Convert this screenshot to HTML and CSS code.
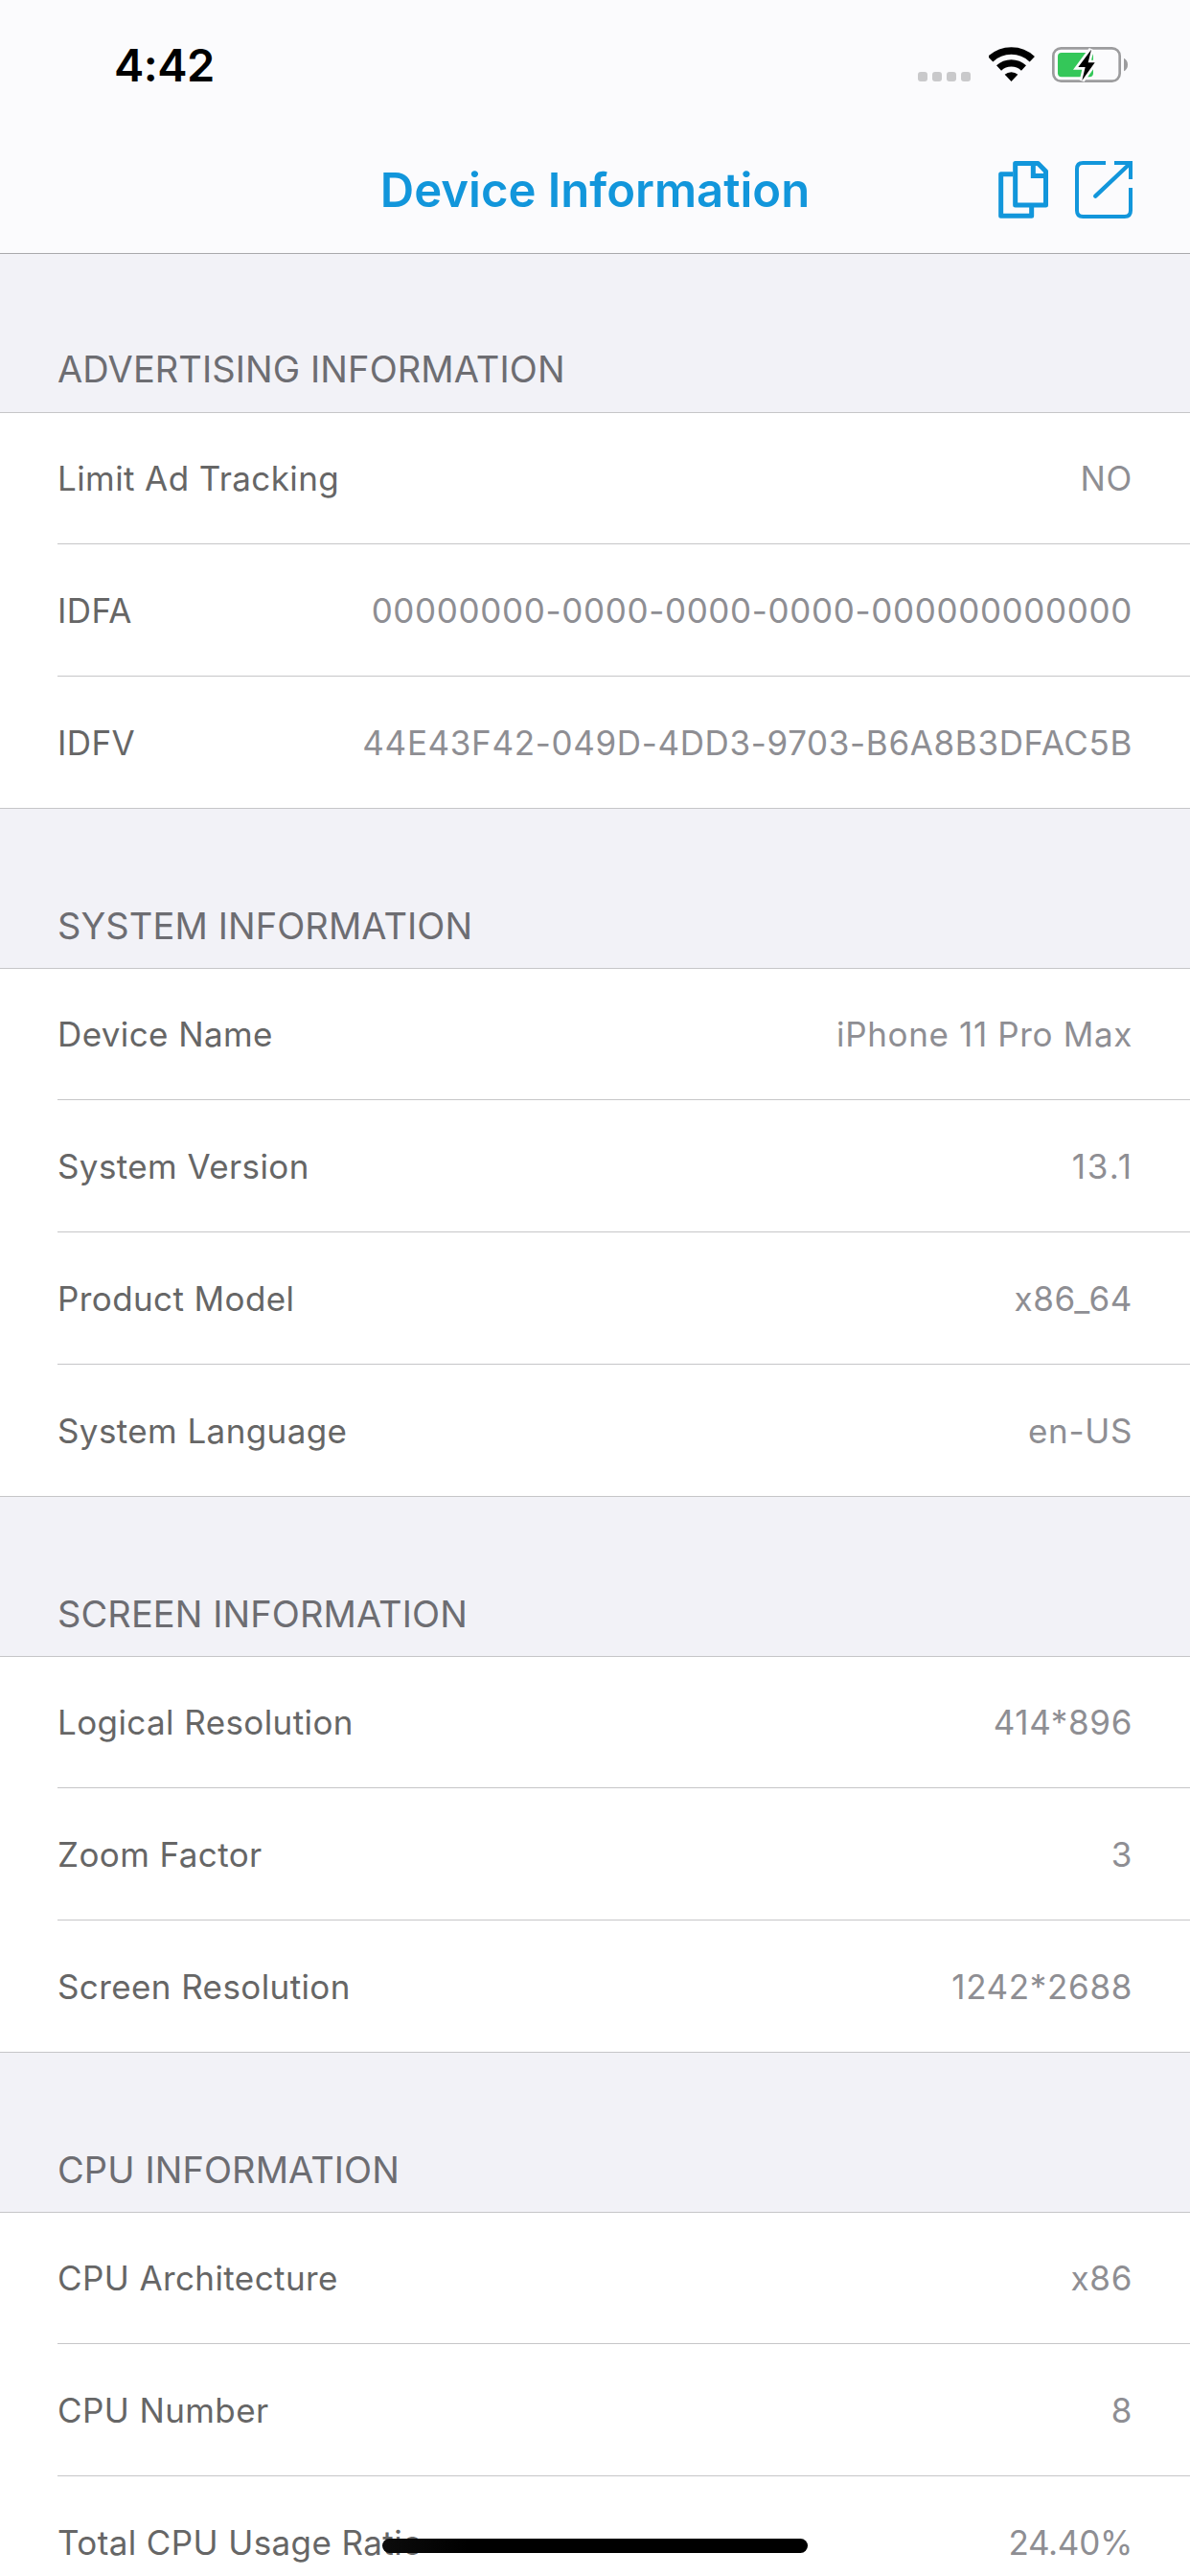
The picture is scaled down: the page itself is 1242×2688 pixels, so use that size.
FILE: index.html
```html
<!DOCTYPE html>
<html lang="en">
<head>
<meta charset="utf-8">
<title>Device Information</title>
<link rel="stylesheet" href="styles.css">
</head>
<body>
<div class="screen">
  <header class="topbar">
    <div class="status">
      <span class="clock">4:42</span>
      <div class="status-icons">
        <div class="signal"><i></i><i></i><i></i><i></i></div>
        <svg class="wifi" viewBox="276 54 144 114">
          <path d="M281.1 95.1A95 95 0 0 1 411.9 95.1" fill="none" stroke="#000" stroke-width="23"/>
          <path d="M307.6 123A56.5 56.5 0 0 1 385.4 123" fill="none" stroke="#000" stroke-width="22"/>
          <path d="M346.5 165L326 143.500A31 31 0 0 1 367 143.500Z"/>
        </svg>
        <svg class="battery" viewBox="474 54 240 117">
          <rect x="478" y="61" width="208" height="103" rx="24" fill="none" stroke="#9c9c9e" stroke-width="8"/>
          <path d="M699 92Q711 98 711 112.500T699 133Z" fill="#9c9c9e"/>
          <rect x="492" y="75" width="111" height="76" rx="12" fill="#34c759"/>
          <path d="M597 65L556 120H578L568 162L608 106H587Z" stroke="#fbfbfd" stroke-width="16"/>
          <path d="M597 65L556 120H578L568 162L608 106H587Z"/>
        </svg>
      </div>
    </div>
    <div class="navbar">
      <h1 class="title">Device Information</h1>
      <div class="actions">
        <svg class="copy" viewBox="66 54 156 180" fill="none" stroke="#1296db" stroke-width="15" stroke-linejoin="round">
          <path d="M112 95H74V226H170V198"/>
          <path d="M119 61.500H190L214.500 86V192H119Z"/>
          <path d="M175 62V100.500H214" stroke-linejoin="miter"/>
        </svg>
        <svg class="share" viewBox="306 54 180 180" fill="none" stroke="#1296db" stroke-width="12">
          <path d="M402 60H331Q312 60 312 79V209Q312 228 331 228H461Q480 228 480 209V138"/>
          <path d="M429 60H480V111"/>
          <path d="M480 60L370 164" stroke-linecap="round" stroke-width="13"/>
        </svg>
      </div>
    </div>
  </header>
  <main class="list">
    <h2 class="heading first">ADVERTISING INFORMATION</h2>
    <section class="group">
      <div class="row"><span class="label">Limit Ad Tracking</span><span class="value">NO</span></div>
      <div class="row"><span class="label">IDFA</span><span class="value">00000000-0000-0000-0000-000000000000</span></div>
      <div class="row"><span class="label">IDFV</span><span class="value">44E43F42-049D-4DD3-9703-B6A8B3DFAC5B</span></div>
    </section>
    <h2 class="heading">SYSTEM INFORMATION</h2>
    <section class="group">
      <div class="row"><span class="label">Device Name</span><span class="value">iPhone 11 Pro Max</span></div>
      <div class="row"><span class="label">System Version</span><span class="value loose">13.1</span></div>
      <div class="row"><span class="label">Product Model</span><span class="value">x86_64</span></div>
      <div class="row"><span class="label">System Language</span><span class="value">en-US</span></div>
    </section>
    <h2 class="heading">SCREEN INFORMATION</h2>
    <section class="group">
      <div class="row"><span class="label">Logical Resolution</span><span class="value">414*896</span></div>
      <div class="row"><span class="label">Zoom Factor</span><span class="value">3</span></div>
      <div class="row"><span class="label">Screen Resolution</span><span class="value">1242*2688</span></div>
    </section>
    <h2 class="heading">CPU INFORMATION</h2>
    <section class="group">
      <div class="row"><span class="label">CPU Architecture</span><span class="value">x86</span></div>
      <div class="row"><span class="label">CPU Number</span><span class="value">8</span></div>
      <div class="row"><span class="label">Total CPU Usage Ratio</span><span class="value snug">24.40%</span></div>
    </section>
  </main>
  <div class="home-indicator"></div>
</div>
</body>
</html>
```
FILE: styles.css
```css
* { box-sizing: border-box; }

body {
  margin: 0;
  font-family: Inter, "Liberation Sans", sans-serif;
  background: #f2f2f7;
}

svg { display: block; }

.screen {
  position: relative;
  width: 1242px;
  height: 2688px;
  overflow: hidden;
}

.topbar {
  height: 265px;
  background: #fbfbfd;
  border-bottom: 1px solid #a9a9ac;
}

.status {
  display: flex;
  justify-content: space-between;
  height: 132px;
  padding: 0 64px 0 119px;
}

.clock {
  padding-top: 40px;
  font-size: 47px;
  font-weight: 600;
  line-height: 56px;
  letter-spacing: -0.5px;
}

.status-icons {
  display: flex;
  align-items: flex-start;
  padding-top: 48px;
}

.signal {
  display: flex;
  gap: 5px;
  margin: 27px 19px 0 0;
}

.signal i {
  width: 10px;
  height: 10px;
  border-radius: 3px;
  background: #c9c9cb;
}

.wifi { width: 48px; height: 38px; margin-right: 18px; }
.battery { width: 80px; height: 39px; }

.navbar {
  display: grid;
  grid-template-columns: 1fr auto 1fr;
  align-items: center;
  height: 132px;
  padding: 0 60px;
}

.title {
  grid-column: 2;
  margin: 0;
  padding-top: 1px;
  font-size: 49px;
  font-weight: 560;
  line-height: 60px;
  letter-spacing: 0;
  color: #1296db;
}

.actions {
  display: flex;
  justify-content: flex-end;
  gap: 28px;
}

.copy { width: 52px; height: 60px; }
.share { width: 60px; height: 60px; }

.heading {
  height: 166px;
  margin: 0;
  padding: 97px 60px 0;
  font-size: 38px;
  font-weight: 400;
  line-height: 50px;
  letter-spacing: 0.1px;
  color: #6d6d72;
}

.heading.first { height: 165px; padding-top: 95px; }

.group {
  background: #fff;
  border-top: 1px solid #c6c6c8;
  border-bottom: 1px solid #c6c6c8;
}

.row {
  display: flex;
  align-items: center;
  justify-content: space-between;
  height: 138px;
  margin-left: 60px;
  padding-right: 60px;
  border-bottom: 1px solid #c6c6c8;
  font-size: 35px;
  line-height: 44px;
}

.row:first-child { height: 137px; }
.row:last-child { height: 137px; border-bottom: 0; }

.label { color: #666; letter-spacing: 0.4px; }
.value { color: #8e8e93; letter-spacing: 0.65px; }
.value.loose { letter-spacing: 2px; margin-right: -1px; }
.value.snug { letter-spacing: -0.3px; }

.home-indicator {
  position: absolute;
  left: 399px;
  top: 2649px;
  width: 444px;
  height: 15px;
  border-radius: 8px;
  background: linear-gradient(90deg, #0c0c0c, #000 20%);
}
```
